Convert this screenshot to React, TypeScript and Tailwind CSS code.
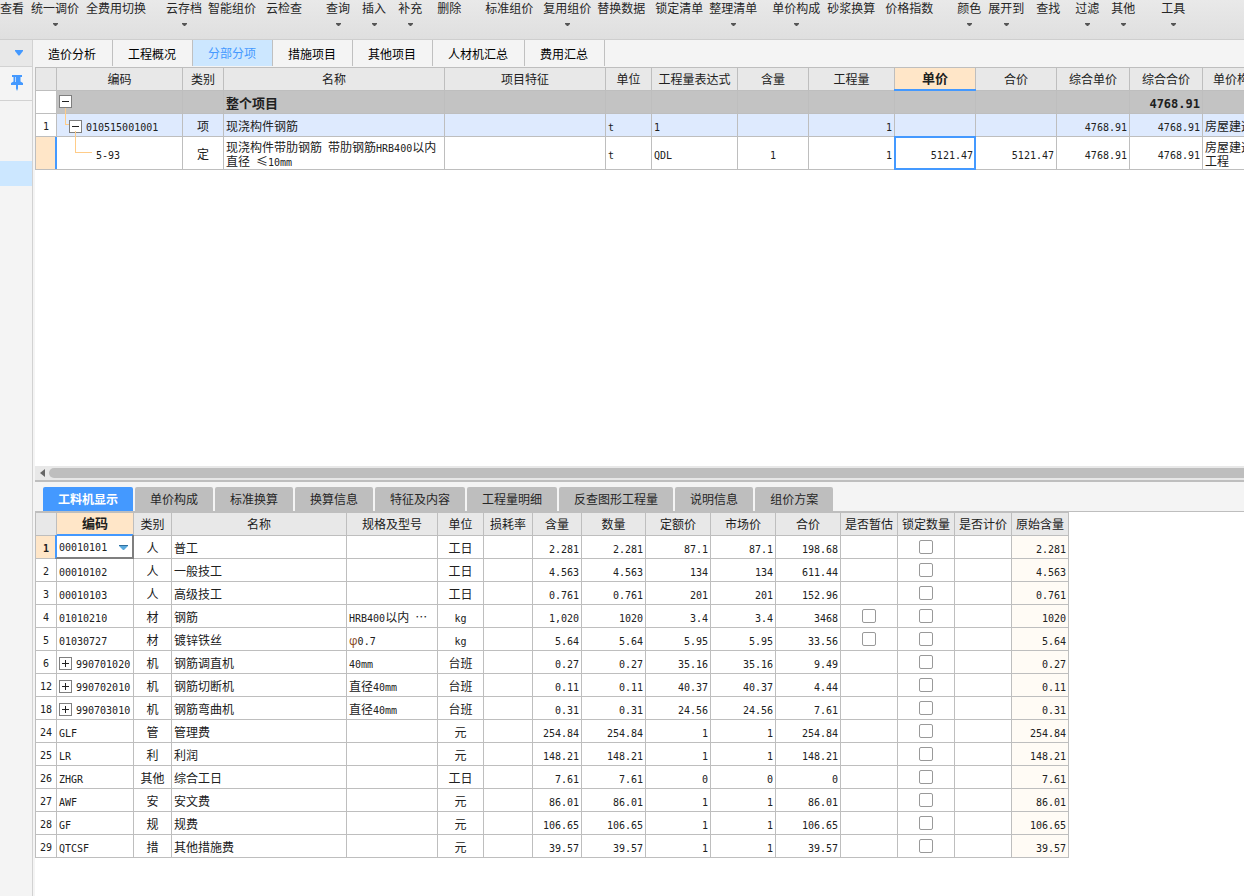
import { Fragment, useState } from "react";
import type { ReactNode } from "react";

type Align = "left" | "center" | "right";

const alignClass: Record<Align, string> = {
  left: "text-left",
  center: "text-center",
  right: "text-right",
};

/* Latin letters and digits use the narrow monospace face, everything else the CJK face. */
function T({ children, bold = false }: { children: string; bold?: boolean }) {
  const runs = children.match(/[\x20-\x7e]+|[^\x20-\x7e]+/g) ?? [];
  return (
    <>
      {runs.map((run, i) =>
        /^[\x20-\x7e]/.test(run) ? (
          <span
            key={i}
            className={
              bold
                ? "font-['DejaVu_Sans_Mono',monospace] text-[12px] leading-none"
                : "font-['DejaVu_Sans_Mono',monospace] text-[10px] leading-none"
            }
          >
            {run}
          </span>
        ) : (
          <Fragment key={i}>{run}</Fragment>
        ),
      )}
    </>
  );
}

const toolbar: { label: string; menu?: boolean; gap: string }[] = [
  { label: "查看", gap: "ml-0" },
  { label: "统一调价", menu: true, gap: "ml-[7px]" },
  { label: "全费用切换", gap: "ml-[7px]" },
  { label: "云存档", menu: true, gap: "ml-[20px]" },
  { label: "智能组价", gap: "ml-[6px]" },
  { label: "云检查", gap: "ml-[10px]" },
  { label: "查询", menu: true, gap: "ml-[24px]" },
  { label: "插入", menu: true, gap: "ml-[12px]" },
  { label: "补充", menu: true, gap: "ml-[12px]" },
  { label: "删除", gap: "ml-[15px]" },
  { label: "标准组价", gap: "ml-[24px]" },
  { label: "复用组价", menu: true, gap: "ml-[10px]" },
  { label: "替换数据", gap: "ml-[6px]" },
  { label: "锁定清单", gap: "ml-[10px]" },
  { label: "整理清单", menu: true, gap: "ml-[6px]" },
  { label: "单价构成", menu: true, gap: "ml-[15px]" },
  { label: "砂浆换算", gap: "ml-[7px]" },
  { label: "价格指数", gap: "ml-[10px]" },
  { label: "颜色", menu: true, gap: "ml-[24px]" },
  { label: "展开到", menu: true, gap: "ml-[7px]" },
  { label: "查找", gap: "ml-[12px]" },
  { label: "过滤", menu: true, gap: "ml-[15px]" },
  { label: "其他", menu: true, gap: "ml-[12px]" },
  { label: "工具", menu: true, gap: "ml-[26px]" },
];

function Toolbar() {
  return (
    <header className="flex h-10 shrink-0 overflow-hidden border-b border-[#cecece] bg-linear-to-b from-[#e9e9e9] to-[#dfdfdf]">
      {toolbar.map((t) => (
        <button
          key={t.label}
          type="button"
          className={`flex shrink-0 flex-col items-center whitespace-nowrap text-[#262626] ${t.gap}`}
        >
          <span className="leading-4">{t.label}</span>
          {t.menu && (
            <svg viewBox="0 0 5 3" className="mt-[7px] h-[3px] w-[5px]" aria-hidden="true">
              <path d="M0 0h5v1L3 3H2L0 1z" fill="#555" />
            </svg>
          )}
        </button>
      ))}
    </header>
  );
}

function Sidebar() {
  return (
    <aside className="flex w-[33px] shrink-0 flex-col border-r border-[#d2d2d2] bg-[#f4f4f4]">
      <button
        type="button"
        aria-label="展开菜单"
        className="flex h-[27px] items-center justify-end border-b border-[#d2d2d2] bg-[#e8e8e8] pr-[9px]"
      >
        <svg viewBox="0 0 8 6" className="h-[6px] w-2" aria-hidden="true">
          <path d="M0 0h8v1L4.500 5.500h-1L0 1z" fill="#4499ff" />
        </svg>
      </button>
      <button
        type="button"
        aria-label="固定"
        className="flex h-[34px] items-start justify-end border-b border-[#d2d2d2] pt-2 pr-[9px]"
      >
        <svg viewBox="0 0 12 16" className="h-4 w-3" aria-hidden="true">
          <path d="M1 0h10v2H9.500v4.500L12 8v2H7v3.500L6 16l-1-2.500V10H0V8l2.500-1.500V2H1z" fill="#4499ff" />
          <path d="M4.500 2v5" stroke="#b9d9ff" strokeWidth="1" />
        </svg>
      </button>
      <div className="mt-[60px] h-[25px] bg-[#cce7ff]" />
    </aside>
  );
}

const topTabs = ["造价分析", "工程概况", "分部分项", "措施项目", "其他项目", "人材机汇总", "费用汇总"];

function TopTabs() {
  const [active, setActive] = useState("分部分项");
  return (
    <nav className="flex h-[27px] shrink-0 bg-[#f4f4f4] text-black">
      {topTabs.map((t) => (
        <button
          key={t}
          type="button"
          onClick={() => setActive(t)}
          className={
            t === active
              ? "h-[26px] border-r border-[#c0c0c0] bg-[#cce7ff] px-[15px] pr-4 leading-[26px] whitespace-nowrap text-[#4499ff]"
              : "h-[26px] border-r border-[#c0c0c0] px-[15px] pr-4 leading-[28px] whitespace-nowrap"
          }
        >
          {t}
        </button>
      ))}
    </nav>
  );
}

const cell = "relative border-r border-b border-[#bebebe] align-middle leading-[14px]";
const firstCell = `${cell} border-l p-0 text-center`;
const head = `${cell} overflow-hidden bg-[#e8e8e8] p-0 text-center font-normal whitespace-nowrap`;
const headActive =
  "relative border-r border-b border-[#bebebe] bg-[#ffe6c8] p-0 pb-0.5 text-center align-middle text-[13px] leading-[14px] font-bold";

function Toggle({ open }: { open: boolean }) {
  return (
    <button
      type="button"
      aria-label={open ? "折叠" : "展开"}
      className="relative block size-[13px] shrink-0 border border-[#7f7f7f] bg-white"
    >
      <svg viewBox="0 0 11 11" className="size-[11px]" aria-hidden="true">
        <path d={open ? "M2 5.500h7" : "M2 5.500h7M5.500 2v7"} stroke="#222" fill="none" />
      </svg>
    </button>
  );
}

function Cell({
  align = "left",
  className = "",
  children,
}: {
  align?: Align;
  className?: string;
  children?: ReactNode;
}) {
  return (
    <td className={`${cell} px-0.5 pt-0.5 pb-0 ${alignClass[align]} ${className}`}>
      {typeof children === "string" ? <T>{children}</T> : children}
    </td>
  );
}

const itemHeads = ["编码", "类别", "名称", "项目特征", "单位", "工程量表达式", "含量", "工程量", "单价", "合价", "综合单价", "综合合价", "单价构成"];

function ItemTable() {
  return (
    <table className="w-[1237px] table-fixed border-separate border-spacing-0 border-t border-[#bebebe]">
      <colgroup>
        <col className="w-[22px]" />
        <col className="w-[126px]" />
        <col className="w-[41px]" />
        <col className="w-[221px]" />
        <col className="w-[161px]" />
        <col className="w-[46px]" />
        <col className="w-[86px]" />
        <col className="w-[71px]" />
        <col className="w-[86px]" />
        <col className="w-[81px]" />
        <col className="w-[81px]" />
        <col className="w-[73px]" />
        <col className="w-[73px]" />
        <col className="w-[69px]" />
      </colgroup>
      <thead>
        <tr className="h-[23px]">
          <th className={`${head} border-l`} />
          {itemHeads.map((h) =>
            h === "单价" ? (
              <th key={h} className={headActive}>
                {h}
                <span className="absolute -right-px -bottom-px -left-px h-0.5 bg-[#4499ff]" />
              </th>
            ) : (
              <th key={h} className={head}>
                {h}
              </th>
            ),
          )}
        </tr>
      </thead>
      <tbody>
        <tr className="h-[23px] bg-[#c3c3c3] font-bold">
          <td className={`${firstCell} bg-white`} />
          <Cell>
            <div className="mb-[3px]">
              <Toggle open />
            </div>
          </Cell>
          <Cell />
          <Cell className="text-[13px]">整个项目</Cell>
          <Cell />
          <Cell />
          <Cell />
          <Cell />
          <Cell />
          <Cell />
          <Cell />
          <Cell />
          <Cell align="right">
            <T bold>4768.91</T>
          </Cell>
          <Cell />
        </tr>
        <tr className="h-[23px] bg-[#deeafe]">
          <td className={`${firstCell} bg-white`}>
            <T>1</T>
          </td>
          <Cell>
            <span className="absolute -top-[6px] left-[8px] h-[17px] w-1 border-b border-l border-[#ffcc88]" />
            <div className="flex items-center gap-1 pl-[10px]">
              <Toggle open />
              <span>
                <T>010515001001</T>
              </span>
            </div>
          </Cell>
          <Cell align="center">项</Cell>
          <Cell>现浇构件钢筋</Cell>
          <Cell />
          <Cell>t</Cell>
          <Cell>1</Cell>
          <Cell />
          <Cell align="right">1</Cell>
          <Cell />
          <Cell />
          <Cell align="right">4768.91</Cell>
          <Cell align="right">4768.91</Cell>
          <Cell className="whitespace-nowrap">房屋建造</Cell>
        </tr>
        <tr className="h-[33px] bg-white">
          <td className={`${firstCell} bg-[#ffe6c8]`}>
            <span className="absolute inset-y-0 -right-px w-0.5 bg-[#4499ff]" />
          </td>
          <Cell>
            <span className="absolute -top-[6px] left-[18px] h-[22px] w-[17px] border-b border-l border-[#ffcc88]" />
            <span className="pl-[37px]">
              <T>5-93</T>
            </span>
          </Cell>
          <Cell align="center">定</Cell>
          <Cell>现浇构件带肋钢筋 带肋钢筋HRB400以内直径 ≤10mm</Cell>
          <Cell />
          <Cell>t</Cell>
          <Cell>QDL</Cell>
          <Cell align="center">1</Cell>
          <Cell align="right">1</Cell>
          <Cell align="right">
            <T>5121.47</T>
            <span className="absolute -inset-px border-2 border-[#4499ff]" />
          </Cell>
          <Cell align="right">5121.47</Cell>
          <Cell align="right">4768.91</Cell>
          <Cell align="right">4768.91</Cell>
          <Cell className="whitespace-nowrap">
            房屋建造
            <br />
            工程
          </Cell>
        </tr>
      </tbody>
    </table>
  );
}

function ScrollBar() {
  return (
    <div className="flex h-4 shrink-0 items-center overflow-hidden border-b-2 border-[#bebebe] bg-[#e8e8e8]">
      <button type="button" aria-label="向左滚动" className="flex w-[14px] shrink-0 justify-center">
        <svg viewBox="0 0 5 8" className="h-2 w-[5px]" aria-hidden="true">
          <path d="M5 0v8L0 4z" fill="#666" />
        </svg>
      </button>
      <div className="h-[10px] flex-1 rounded-l-full bg-[#bebebe]" />
    </div>
  );
}

const bottomTabs = ["工料机显示", "单价构成", "标准换算", "换算信息", "特征及内容", "工程量明细", "反查图形工程量", "说明信息", "组价方案"];

function BottomTabs() {
  const [active, setActive] = useState("工料机显示");
  return (
    <nav className="flex h-[30px] shrink-0 items-end gap-0.5 border-b border-[#bebebe] bg-[#f4f4f4] pl-2">
      {bottomTabs.map((t) => (
        <button
          key={t}
          type="button"
          onClick={() => setActive(t)}
          className={
            t === active
              ? "h-6 rounded-t-xs bg-[#4499ff] px-[15px] leading-6 font-bold whitespace-nowrap text-white"
              : "h-6 rounded-t-xs bg-[#bebebe] px-[15px] leading-6 whitespace-nowrap text-[#262626]"
          }
        >
          {t}
        </button>
      ))}
    </nav>
  );
}

const resHeads = ["编码", "类别", "名称", "规格及型号", "单位", "损耗率", "含量", "数量", "定额价", "市场价", "合价", "是否暂估", "锁定数量", "是否计价", "原始含量"];

interface Resource {
  no: string;
  code: string;
  kind: string;
  name: string;
  spec?: string;
  unit: string;
  nums: [string, string, string, string, string];
  orig: string;
  group?: boolean;
  estimate?: boolean;
}

const resources: Resource[] = [
  { no: "1", code: "00010101", kind: "人", name: "普工", unit: "工日", nums: ["2.281", "2.281", "87.1", "87.1", "198.68"], orig: "2.281" },
  { no: "2", code: "00010102", kind: "人", name: "一般技工", unit: "工日", nums: ["4.563", "4.563", "134", "134", "611.44"], orig: "4.563" },
  { no: "3", code: "00010103", kind: "人", name: "高级技工", unit: "工日", nums: ["0.761", "0.761", "201", "201", "152.96"], orig: "0.761" },
  { no: "4", code: "01010210", kind: "材", name: "钢筋", spec: "HRB400以内 …", unit: "kg", nums: ["1,020", "1020", "3.4", "3.4", "3468"], orig: "1020", estimate: true },
  { no: "5", code: "01030727", kind: "材", name: "镀锌铁丝", spec: "φ0.7", unit: "kg", nums: ["5.64", "5.64", "5.95", "5.95", "33.56"], orig: "5.64", estimate: true },
  { no: "6", code: "990701020", kind: "机", name: "钢筋调直机", spec: "40mm", unit: "台班", nums: ["0.27", "0.27", "35.16", "35.16", "9.49"], orig: "0.27", group: true },
  { no: "12", code: "990702010", kind: "机", name: "钢筋切断机", spec: "直径40mm", unit: "台班", nums: ["0.11", "0.11", "40.37", "40.37", "4.44"], orig: "0.11", group: true },
  { no: "18", code: "990703010", kind: "机", name: "钢筋弯曲机", spec: "直径40mm", unit: "台班", nums: ["0.31", "0.31", "24.56", "24.56", "7.61"], orig: "0.31", group: true },
  { no: "24", code: "GLF", kind: "管", name: "管理费", unit: "元", nums: ["254.84", "254.84", "1", "1", "254.84"], orig: "254.84" },
  { no: "25", code: "LR", kind: "利", name: "利润", unit: "元", nums: ["148.21", "148.21", "1", "1", "148.21"], orig: "148.21" },
  { no: "26", code: "ZHGR", kind: "其他", name: "综合工日", unit: "工日", nums: ["7.61", "7.61", "0", "0", "0"], orig: "7.61" },
  { no: "27", code: "AWF", kind: "安", name: "安文费", unit: "元", nums: ["86.01", "86.01", "1", "1", "86.01"], orig: "86.01" },
  { no: "28", code: "GF", kind: "规", name: "规费", unit: "元", nums: ["106.65", "106.65", "1", "1", "106.65"], orig: "106.65" },
  { no: "29", code: "QTCSF", kind: "措", name: "其他措施费", unit: "元", nums: ["39.57", "39.57", "1", "1", "39.57"], orig: "39.57" },
];

/* The diameter sign is set in a face whose phi has an open loop. */
function Spec({ value }: { value: string }) {
  if (!value.startsWith("φ")) return <T>{value}</T>;
  return (
    <>
      <span className="font-['Open_Sans',sans-serif] leading-none text-[#8a4a1c]">φ</span>
      <T>{value.slice(1)}</T>
    </>
  );
}

function Check({ label }: { label: string }) {
  return (
    <input
      type="checkbox"
      aria-label={label}
      className="mx-auto mb-[3px] block size-[14px] appearance-none rounded-xs border border-[#999] bg-white checked:bg-[#4499ff]"
    />
  );
}

function ResourceTable() {
  return (
    <table className="w-[1034px] table-fixed border-separate border-spacing-0 border-t border-[#bebebe]">
      <colgroup>
        <col className="w-[22px]" />
        <col className="w-[77px]" />
        <col className="w-[38px]" />
        <col className="w-[175px]" />
        <col className="w-[91px]" />
        <col className="w-[46px]" />
        <col className="w-[49px]" />
        <col className="w-[49px]" />
        <col className="w-[64px]" />
        <col className="w-[65px]" />
        <col className="w-[65px]" />
        <col className="w-[65px]" />
        <col className="w-[57px]" />
        <col className="w-[57px]" />
        <col className="w-[57px]" />
        <col className="w-[57px]" />
      </colgroup>
      <thead>
        <tr className="h-[23px]">
          <th className={`${head} border-l`} />
          {resHeads.map((h, i) => (
            <th key={h} className={i === 0 ? headActive : head}>
              {h}
              {i === 0 && <span className="absolute right-0 -bottom-px left-0 h-0.5 bg-[#4499ff]" />}
            </th>
          ))}
        </tr>
      </thead>
      <tbody>
        {resources.map((r, i) => (
          <tr key={r.no} className="h-[23px] bg-white">
            <td className={i === 0 ? `${firstCell} bg-[#ffe6c8] font-bold` : firstCell}>
              <T>{r.no}</T>
            </td>
            {i === 0 ? (
              <Cell>
                <select
                  aria-label="编码"
                  defaultValue={r.code}
                  className="block w-full appearance-none bg-transparent p-0 font-['DejaVu_Sans_Mono',monospace] text-[10px] leading-[14px] outline-none"
                >
                  <option>{r.code}</option>
                </select>
                <svg viewBox="0 0 9 5" className="pointer-events-none absolute top-[9px] right-[5px] h-[5px] w-[9px]" aria-hidden="true">
                  <path d="M0 0h9v1L5 5H4L0 1z" fill="#5aa9dd" />
                  <path d="M0 .5h9" stroke="#2f6f9f" />
                </svg>
                <span className="pointer-events-none absolute -top-px -right-px -bottom-px -left-0.5 border-r-2 border-b-2 border-l-2 border-r-[#7f7f7f] border-b-[#7f7f7f] border-l-[#4499ff]" />
              </Cell>
            ) : (
              <Cell className="whitespace-nowrap">
                {r.group ? (
                  <div className="flex items-center gap-1">
                    <Toggle open={false} />
                    <span>
                      <T>{r.code}</T>
                    </span>
                  </div>
                ) : (
                  <T>{r.code}</T>
                )}
              </Cell>
            )}
            <Cell align="center">{r.kind}</Cell>
            <Cell>{r.name}</Cell>
            <Cell>{r.spec && <Spec value={r.spec} />}</Cell>
            <Cell align="center">{r.unit}</Cell>
            <Cell />
            {r.nums.map((n, k) => (
              <Cell key={k} align="right">
                {n}
              </Cell>
            ))}
            <Cell>{r.estimate && <Check label={`${r.name} 是否暂估`} />}</Cell>
            <Cell>
              <Check label={`${r.name} 锁定数量`} />
            </Cell>
            <Cell />
            <Cell align="right" className="bg-[#fffbf5]">
              {r.orig}
            </Cell>
          </tr>
        ))}
      </tbody>
    </table>
  );
}

export default function App() {
  return (
    <div className="flex min-h-screen flex-col overflow-hidden bg-[#f4f4f4] font-['Noto_Sans_CJK_SC',sans-serif] text-[12px] leading-[14px] text-[#202020]">
      <Toolbar />
      <div className="flex min-w-0 flex-1">
        <Sidebar />
        <main className="flex min-w-0 flex-1 flex-col">
          <TopTabs />
          <div className="flex flex-1 flex-col pl-0.5">
            <section className="flex-1 overflow-hidden border-t border-[#bebebe] bg-white">
              <div className="-mt-px">
                <ItemTable />
              </div>
            </section>
            <ScrollBar />
            <BottomTabs />
            <section className="overflow-hidden bg-white pb-[38px]">
              <ResourceTable />
            </section>
          </div>
        </main>
      </div>
    </div>
  );
}
